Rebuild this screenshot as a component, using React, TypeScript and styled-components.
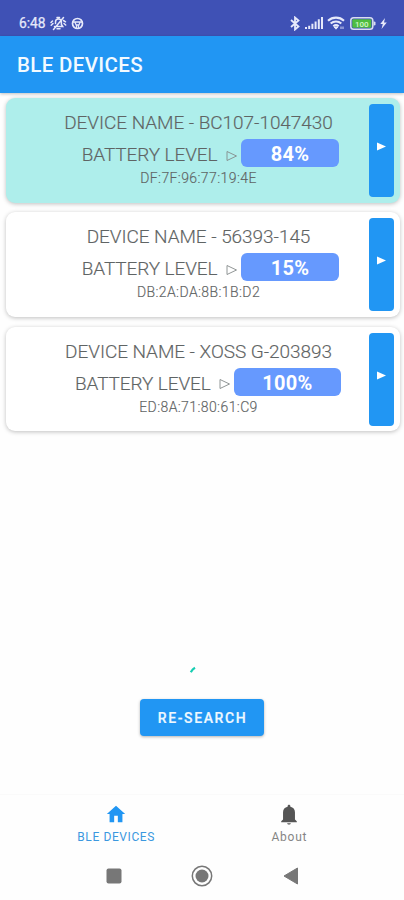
import React from "react";
import styled, { createGlobalStyle } from "styled-components";

const GlobalStyle = createGlobalStyle`
  * { box-sizing: border-box; }
  body { margin: 0; background: #fefefe; font-family: Roboto, "Liberation Sans", sans-serif; }
`;

const Screen = styled.div`
  width: 404px;
  height: 900px;
  display: flex;
  flex-direction: column;
  overflow: hidden;
  background: #fefefe;
`;

const StatusBar = styled.header`
  height: 36px;
  padding: 11px 17px 0 19px;
  display: flex;
  justify-content: space-between;
  background: #3f51b5;
  color: #e6e9fa;
`;

const StatusGroup = styled.div<{ $gap: number }>`
  height: 24px;
  display: flex;
  align-items: center;
  gap: ${(p) => p.$gap}px;
  svg { display: block; }
`;

const Clock = styled.span`
  width: 27px;
  font-size: 13.8px;
  line-height: 24px;
  letter-spacing: -0.05px;
  white-space: nowrap;
  -webkit-text-stroke: 0.25px currentColor;
`;

const AppBar = styled.div`
  height: 57px;
  flex: none;
  padding-left: 17px;
  display: flex;
  align-items: center;
  background: #2196f3;
  box-shadow: 0 1px 3px rgba(0, 0, 0, 0.25);
`;

const Title = styled.h1`
  margin: 1px 0 0;
  color: #f2faff;
  font-size: 20.5px;
  font-weight: 500;
  line-height: 24px;
  letter-spacing: 0.35px;
`;

const DeviceList = styled.main`
  flex: 1;
  padding: 5px 4px 0 6px;
  display: flex;
  flex-direction: column;
  gap: 9.9px;
`;

const Card = styled.article<{ $active?: boolean }>`
  height: 104.5px;
  flex: none;
  padding: 6px;
  display: flex;
  border-radius: 9px;
  background: ${(p) => (p.$active ? "#aeeeeb" : "#fff")};
  box-shadow: 0 1px 4px rgba(0, 0, 0, 0.25);
`;

const Details = styled.div`
  width: 357px;
  padding-left: 16px;
  display: flex;
  flex-direction: column;
  align-items: center;
  color: #5f6464;
`;

const DeviceName = styled.div`
  height: 35px;
  line-height: 37px;
  font-size: 19px;
  font-weight: 300;
  letter-spacing: -0.06px;
  -webkit-text-stroke: 0.15px currentColor;
  white-space: nowrap;
`;

const BatteryRow = styled.div<{ $indent: number }>`
  height: 28px;
  margin-left: ${(p) => p.$indent}px;
  display: flex;
  align-items: center;
  font-size: 19px;
  font-weight: 300;
  white-space: nowrap;
  -webkit-text-stroke: 0.15px currentColor;
`;

const BatteryLabel = styled.span`
  width: 144px;
  line-height: 28px;
  padding-top: 4px;
  letter-spacing: -0.1px;
`;

const Pointer = styled.svg`
  width: 12px;
  height: 12px;
  margin: 5px 3px 0 0;
`;

const Level = styled.span<{ $width: number }>`
  width: ${(p) => p.$width}px;
  height: 28px;
  border-radius: 6px;
  background: #6699fe;
  color: #fff;
  font-size: 20px;
  font-weight: 700;
  line-height: 30px;
  letter-spacing: 0.3px;
  text-align: center;
  -webkit-text-stroke: 0;
`;

const Address = styled.div`
  line-height: 22px;
  font-size: 14px;
  font-weight: 300;
  letter-spacing: 0.4px;
  -webkit-text-stroke: 0.15px currentColor;
  white-space: nowrap;
`;

const OpenButton = styled.button`
  width: 25px;
  height: 93px;
  padding: 0 0 8px;
  border: 0;
  border-radius: 4px;
  display: flex;
  align-items: center;
  justify-content: center;
  background: #2196f3;
`;

const SearchArea = styled.section`
  height: 128px;
  flex: none;
  display: flex;
  flex-direction: column;
  align-items: center;
`;

const Spinner = styled.svg`
  width: 8px;
  height: 8px;
  margin: 0 19px 25px 0;
  flex: none;
`;

const SearchButton = styled.button`
  width: 124px;
  height: 37px;
  padding: 1px 0 0 1px;
  border: 0;
  border-radius: 4px;
  background: #2196f3;
  color: #eef8ff;
  font: 500 14px/36px Roboto, sans-serif;
  letter-spacing: 1.6px;
  -webkit-text-stroke: 0.2px currentColor;
  box-shadow: 0 1px 3px rgba(0, 0, 0, 0.3);
`;

const TabBar = styled.nav`
  height: 58px;
  flex: none;
  padding: 0 28px 0 29.5px;
  display: grid;
  grid-template-columns: 1fr 1fr;
  border-top: 1px solid #fafafa;
`;

const Tab = styled.a<{ $color: string; $spacing: number }>`
  padding-top: 8px;
  display: flex;
  flex-direction: column;
  align-items: center;
  color: ${(p) => p.$color};
  font-size: 12px;
  line-height: 14px;
  letter-spacing: ${(p) => p.$spacing}px;
  svg { display: block; margin-bottom: 5px; }
`;

const SystemBar = styled.footer`
  height: 48px;
  flex: none;
  padding: 0 105.5px 0 106px;
  display: flex;
  align-items: center;
  justify-content: space-between;
`;

const MutedBell = () => (
  <svg width="17" height="15" viewBox="0 0 17 15" fill="none" stroke="currentColor" strokeWidth="1.5" strokeLinecap="round">
    <path d="M4.5 10.5h8.2l-1.3-2V6c0-1.8-1.2-3-3-3S5.500 4.200 5.500 6v1.500M7 12.700h3M13.500 1.500 3.500 13.500M1 6.500l1.500-1.500M1.200 9.200 3 7.500M13.500 4.500l2 1.300M14 7.500l1.700 1.500M7 1.500h2.500" />
  </svg>
);

const Helm = () => (
  <svg width="13" height="13" viewBox="0 0 13 13" fill="none" stroke="currentColor">
    <circle cx="6.500" cy="6.500" r="5" strokeWidth="1.700" />
    <path d="M1.800 5h9.400M4 5.500l1.500 3.200v2.500M9 5.500 7.500 8.700v2.500M5.500 8h2" strokeWidth="1.300" />
  </svg>
);

const Bluetooth = () => (
  <svg width="10" height="15" viewBox="0 0 10 15" fill="none" stroke="currentColor" strokeWidth="1.800">
    <path d="m1 4 7.500 6.500L5 13.500v-12L8.500 4.500 1 11" />
  </svg>
);

const Signal = () => (
  <svg width="18" height="12" viewBox="0 0 18 12" fill="currentColor">
    <path d="M0 10h2v2H0zM3.200 8.800h2V12h-2zM6.400 6.800h2V12h-2zM9.600 4.600h2V12h-2zM12.800 2.300h2V12h-2zM16 0h2v12h-2z" />
  </svg>
);

const Wifi = () => (
  <svg width="18" height="14" viewBox="0 0 18 14" fill="none" stroke="currentColor" strokeWidth="2.100">
    <path d="M1 4.800c4.500-4.200 11.500-4.200 16 0M3.700 7.600c3-2.800 7.600-2.800 10.600 0M6.300 10.200c1.600-1.300 3.800-1.300 5.400 0" />
    <path d="m7 11 2 2.200 2-2.200zM14 10.500v2.500M16 10.500v2.500" fill="currentColor" strokeWidth="0.900" />
  </svg>
);

const Battery = () => (
  <svg width="26" height="13" viewBox="0 0 26 13">
    <rect x="0.800" y="0.800" width="22" height="11.400" rx="2.800" fill="none" stroke="#d9def0" strokeWidth="1.500" />
    <rect x="2.300" y="2.300" width="19" height="8.400" rx="1" fill="#4fbd3f" />
    <path d="M23.500 4.200 25.500 5v3l-2 .8z" fill="#d9def0" />
    <text x="11.800" y="9.500" textAnchor="middle" fill="#d4f5ca" fontFamily="Roboto, sans-serif" fontWeight="500" fontSize="8">100</text>
  </svg>
);

const Bolt = () => (
  <svg width="7" height="11" viewBox="0 0 7 11" fill="currentColor"><path d="M5 0 .3 6h2.500L1.500 11 6.800 4.500H4z" /></svg>
);

type Device = { name: string; level: string; address: string; levelWidth: number; indent: number; active?: boolean };

const devices: Device[] = [
  { name: "BC107-1047430", level: "84%", address: "DF:7F:96:77:19:4E", levelWidth: 98.5, indent: 24, active: true },
  { name: "56393-145", level: "15%", address: "DB:2A:DA:8B:1B:D2", levelWidth: 98.5, indent: 24 },
  { name: "XOSS G-203893", level: "100%", address: "ED:8A:71:80:61:C9", levelWidth: 107, indent: 19 },
];

export default function App() {
  return (
    <>
      <GlobalStyle />
      <Screen>
        <StatusBar>
          <StatusGroup $gap={4}>
            <Clock>6:48</Clock>
            <MutedBell />
            <Helm />
          </StatusGroup>
          <StatusGroup $gap={4.5}>
            <Bluetooth />
            <Signal />
            <Wifi />
            <Battery />
            <Bolt />
          </StatusGroup>
        </StatusBar>
        <AppBar><Title>BLE DEVICES</Title></AppBar>
        <DeviceList>
          {devices.map((d) => (
            <Card key={d.address} $active={d.active}>
              <Details>
                <DeviceName>DEVICE NAME - {d.name}</DeviceName>
                <BatteryRow $indent={d.indent}>
                  <BatteryLabel>BATTERY LEVEL</BatteryLabel>
                  <Pointer viewBox="0 0 12 12" fill="none" stroke="#858a8a" strokeWidth="0.900">
                    <path d="M1 1.500 10.500 6 1 10.500z" />
                  </Pointer>
                  <Level $width={d.levelWidth}>{d.level}</Level>
                </BatteryRow>
                <Address>{d.address}</Address>
              </Details>
              <OpenButton aria-label="Open device">
                <svg width="9" height="9" viewBox="0 0 9 9" fill="#fff"><path d="M0 0.500 9 4.500 0 8.500z" /></svg>
              </OpenButton>
            </Card>
          ))}
        </DeviceList>
        <SearchArea>
          <Spinner viewBox="0 0 8 8" fill="none" stroke="#16cdb2" strokeWidth="2.200">
            <path d="M1.800 6.200Q3.500 3.200 6 1.800" />
          </Spinner>
          <SearchButton>RE-SEARCH</SearchButton>
        </SearchArea>
        <TabBar>
          <Tab $color="#3b98df" $spacing={0.6}>
            <svg width="22" height="22" viewBox="0 0 24 24" fill="#2196f3"><path d="M10 21v-7h4v7h5v-9h3L12 3 2 12h3v9z" /></svg>
            BLE DEVICES
          </Tab>
          <Tab $color="#858585" $spacing={0.75}>
            <svg width="22" height="22" viewBox="0 0 24 24" fill="#555"><path d="M12 23.500c1.100 0 2-.7 2-1.500h-4c0 .8.9 1.500 2 1.500zM18.500 18v-8c0-3-1.900-5.100-5-5.800V3.500c0-.83-.67-1.500-1.500-1.500s-1.500.67-1.500 1.500v.7C7.400 4.900 5.500 7 5.500 10v8L3.500 20v1h17v-1z" /></svg>
            About
          </Tab>
        </TabBar>
        <SystemBar>
          <svg width="16" height="16" viewBox="0 0 16 16"><rect x="0.500" y="0.500" width="15" height="15" rx="2" fill="#777" /></svg>
          <svg width="22" height="22" viewBox="0 0 22 22"><circle cx="11" cy="11" r="9.700" fill="none" stroke="#777" strokeWidth="1.500" /><circle cx="11" cy="11" r="6.500" fill="#777" /></svg>
          <svg width="16" height="18" viewBox="0 0 16 18"><path d="M14.500 1v16L1 9z" fill="#777" stroke="#777" strokeLinejoin="round" /></svg>
        </SystemBar>
      </Screen>
    </>
  );
}
